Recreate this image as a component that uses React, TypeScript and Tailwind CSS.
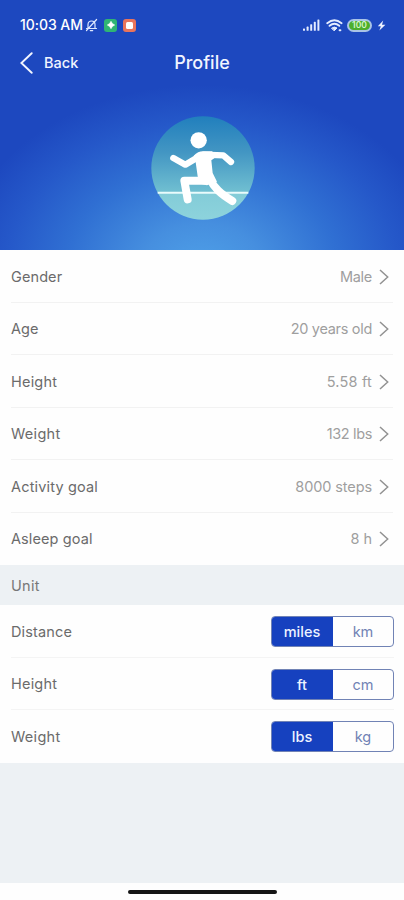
import React from "react";

type Detail = { label: string; value: string; labelTrack: string; valueTrack: string };
type Unit = { label: string; on: string; off: string; labelTrack: string };

const details: Detail[] = [
  { label: "Gender", value: "Male", labelTrack: "tracking-[0.1px]", valueTrack: "tracking-[-0.3px]" },
  { label: "Age", value: "20 years old", labelTrack: "tracking-[0px]", valueTrack: "tracking-[-0.3px]" },
  { label: "Height", value: "5.58 ft", labelTrack: "tracking-[0.2px]", valueTrack: "tracking-[0.2px]" },
  { label: "Weight", value: "132 lbs", labelTrack: "tracking-[0.3px]", valueTrack: "tracking-[-0.35px]" },
  { label: "Activity goal", value: "8000 steps", labelTrack: "tracking-[0.17px]", valueTrack: "tracking-[-0.1px]" },
  { label: "Asleep goal", value: "8 h", labelTrack: "tracking-[0.1px]", valueTrack: "tracking-[0px]" },
];

const units: Unit[] = [
  { label: "Distance", on: "miles", off: "km", labelTrack: "tracking-[0.15px]" },
  { label: "Height", on: "ft", off: "cm", labelTrack: "tracking-[0.2px]" },
  { label: "Weight", on: "lbs", off: "kg", labelTrack: "tracking-[0.3px]" },
];

function StatusBar() {
  return (
    <div className="flex h-[50px] items-center pl-5 pr-[18px] text-white">
      <span className="w-[65px] whitespace-nowrap text-[14px] font-medium leading-5 tracking-[-0.05px]">10:03 AM</span>
      <svg className="h-[14px] w-[13px]" viewBox="0 0 13 14" fill="none" stroke="#dfe8ff" strokeWidth="1.2" strokeLinecap="round">
        <path d="M3 10V6.5a3.5 3.5 0 0 1 7 0V10M1.5 10.5h10M5.3 12.6h2.4M1.5 12.5 11.6 1.5" />
      </svg>
      <div className="ml-[6px] flex h-[13px] w-[13px] items-center justify-center rounded-[3px] bg-[#2fb574]">
        <svg className="h-2 w-2" viewBox="0 0 8 8" fill="#fff" stroke="#fff" strokeWidth=".6">
          <path d="M4 .3 5.4 2.6 7.7 4 5.4 5.4 4 7.7 2.6 5.4.3 4l2.3-1.4z" />
        </svg>
      </div>
      <div className="ml-[6px] flex h-[13px] w-[13px] items-center justify-center rounded-[3px] bg-[#e9745c]">
        <div className="h-[7px] w-[7px] rounded-[1.5px] bg-white" />
      </div>
      <svg className="ml-auto h-3 w-[17px]" viewBox="0 0 17 12" fill="#e4ecff">
        <rect x="0" y="9.4" width="2" height="2.4" rx=".6" />
        <rect x="3.6" y="7.6" width="2" height="4.2" rx=".6" />
        <rect x="7.2" y="5.2" width="2" height="6.6" rx=".6" />
        <rect x="10.8" y="2.8" width="2" height="9" rx=".6" />
        <rect x="14.4" y=".4" width="2" height="11.4" rx=".6" />
      </svg>
      <svg className="ml-[6px] h-[13px] w-[17px]" viewBox="0 0 17 13" fill="none" stroke="#e4ecff" strokeLinecap="round">
        <path d="M1.2 4.2Q8.4-1.7 15.6 4.2" strokeWidth="1.8" />
        <path d="M3.5 6.8q4.9-3.9 9.8 0" strokeWidth="1.9" />
        <path d="M5.8 9q2.6-2 5.2 0L8.4 11.6z" fill="#e4ecff" strokeWidth="1" />
        <path d="M13.6 11.3h.8" strokeWidth="2" />
      </svg>
      <div className="ml-[4px] flex h-[13px] w-[25px] items-center justify-center rounded-full border-2 border-[#a9c3e6] bg-[#4cae2c] text-[8.5px] font-semibold leading-none text-[#d5f5c8]">
        100
      </div>
      <svg className="ml-[5px] h-[11px] w-[9px]" viewBox="0 0 9 11" fill="#edf2ff">
        <path d="M6.2.4.8 6.2h3L2.4 10.6 8.4 4.8H5z" />
      </svg>
    </div>
  );
}

function Runner() {
  return (
    <svg className="ml-[1px] mt-[29px] h-[104px] w-[104px]" viewBox="32 33 312 312">
      <defs>
        <linearGradient id="disc" x1="0" y1="0" x2="0" y2="1">
          <stop offset="0" stopColor="#217fbd" />
          <stop offset=".35" stopColor="#4396c3" />
          <stop offset=".73" stopColor="#70bfd1" />
          <stop offset=".75" stopColor="#83ccd8" />
          <stop offset="1" stopColor="#8dd3dc" />
        </linearGradient>
      </defs>
      <circle cx="188" cy="189" r="155" fill="url(#disc)" />
      <path d="M52 263.5H324" stroke="#e9fbfc" strokeWidth="6" />
      <circle cx="175" cy="106" r="24.5" fill="#fff" />
      <g fill="none" stroke="#fff" strokeLinecap="round" strokeLinejoin="round">
        <path d="M99 159 135 179 180 152" strokeWidth="19" />
        <path d="M190 149 249 151 272 171" strokeWidth="19" />
        <path d="M194 227H132L142 283" strokeWidth="24" />
        <path d="M208 220C222 250 240 266 276 288" strokeWidth="24" />
      </g>
      <path d="M160 152Q174 138 190 139H216L222 160 213 166 217 204 230 230 200 241 180 236 172 214 165 165Z" fill="#fff" />
    </svg>
  );
}

function Chevron() {
  return (
    <svg className="ml-[7px] h-4 w-[10px]" viewBox="0 0 10 16" fill="none" stroke="#929292" strokeWidth="1.5">
      <path d="M1 1 8.7 8 1 15" />
    </svg>
  );
}

function DetailRow({ item, last }: { item: Detail; last: boolean }) {
  return (
    <div className={"mx-[11px] flex h-[52.5px] items-center border-b pr-1 pt-[2px] " + (last ? "border-transparent" : "border-[#f2f2f2]")}>
      <span className={"whitespace-nowrap text-[#6b6b6b] " + item.labelTrack}>{item.label}</span>
      <span className={"ml-auto whitespace-nowrap text-[#9f9f9f] " + item.valueTrack}>{item.value}</span>
      <Chevron />
    </div>
  );
}

function UnitRow({ item, last }: { item: Unit; last: boolean }) {
  return (
    <div className={"ml-[11px] mr-[10px] flex h-[52.5px] items-center border-b pt-[2px] " + (last ? "border-transparent" : "border-[#f4f4f4]")}>
      <span className={"whitespace-nowrap text-[#6b6b6b] " + item.labelTrack}>{item.label}</span>
      <div className="ml-auto flex h-[31px] w-[123px] overflow-hidden rounded-[4px] border border-[#7183b5] text-center leading-[30px]">
        <div className="-my-px -ml-px w-[62px] bg-[#1641bf] pt-px font-medium text-[#eef3ff]">{item.on}</div>
        <div className="flex-1 text-[#7183b5]">{item.off}</div>
      </div>
    </div>
  );
}

export default function App() {
  return (
    <main className="flex h-[900px] w-[404px] flex-col overflow-hidden bg-[#fefefe] font-['Inter','Liberation_Sans',sans-serif] text-[14.5px] leading-5">
      <header className="h-[250px] shrink-0 bg-[#1d48bf] bg-[radial-gradient(ellipse_245px_185px_at_50%_108%,#4fa1e8_0%,#468fdf_25%,#3070d3_55%,#2558c9_80%,#1d48bf_100%)]">
        <StatusBar />
        <nav className="grid h-[37px] grid-cols-3 items-center pb-3 pl-5 pr-5 text-[#f1f5ff]">
          <div className="flex items-center">
            <svg className="h-[22px] w-[13px]" viewBox="0 0 13 22" fill="none" stroke="currentColor" strokeWidth="1.9" strokeLinecap="round">
              <path d="M11.7 1.2 1.4 11 11.7 20.8" />
            </svg>
            <span className="ml-[11px] font-medium">Back</span>
          </div>
          <h1 className="pt-px text-center text-[18px] font-medium leading-6">Profile</h1>
        </nav>
        <div className="flex justify-center">
          <Runner />
        </div>
      </header>
      <section>
        {details.map((item, i) => (
          <DetailRow key={item.label} item={item} last={i === details.length - 1} />
        ))}
      </section>
      <h2 className="flex h-10 shrink-0 items-center bg-[#edf1f4] px-[11px] pt-0.5 tracking-[0.3px] text-[#777]">Unit</h2>
      <section>
        {units.map((item, i) => (
          <UnitRow key={item.label} item={item} last={i === units.length - 1} />
        ))}
      </section>
      <div className="flex-1 bg-[#edf1f4]" />
      <footer className="flex h-[17px] shrink-0 justify-center pt-[7px]">
        <div className="h-[4px] w-[149px] rounded-full bg-[#151515]" />
      </footer>
    </main>
  );
}
